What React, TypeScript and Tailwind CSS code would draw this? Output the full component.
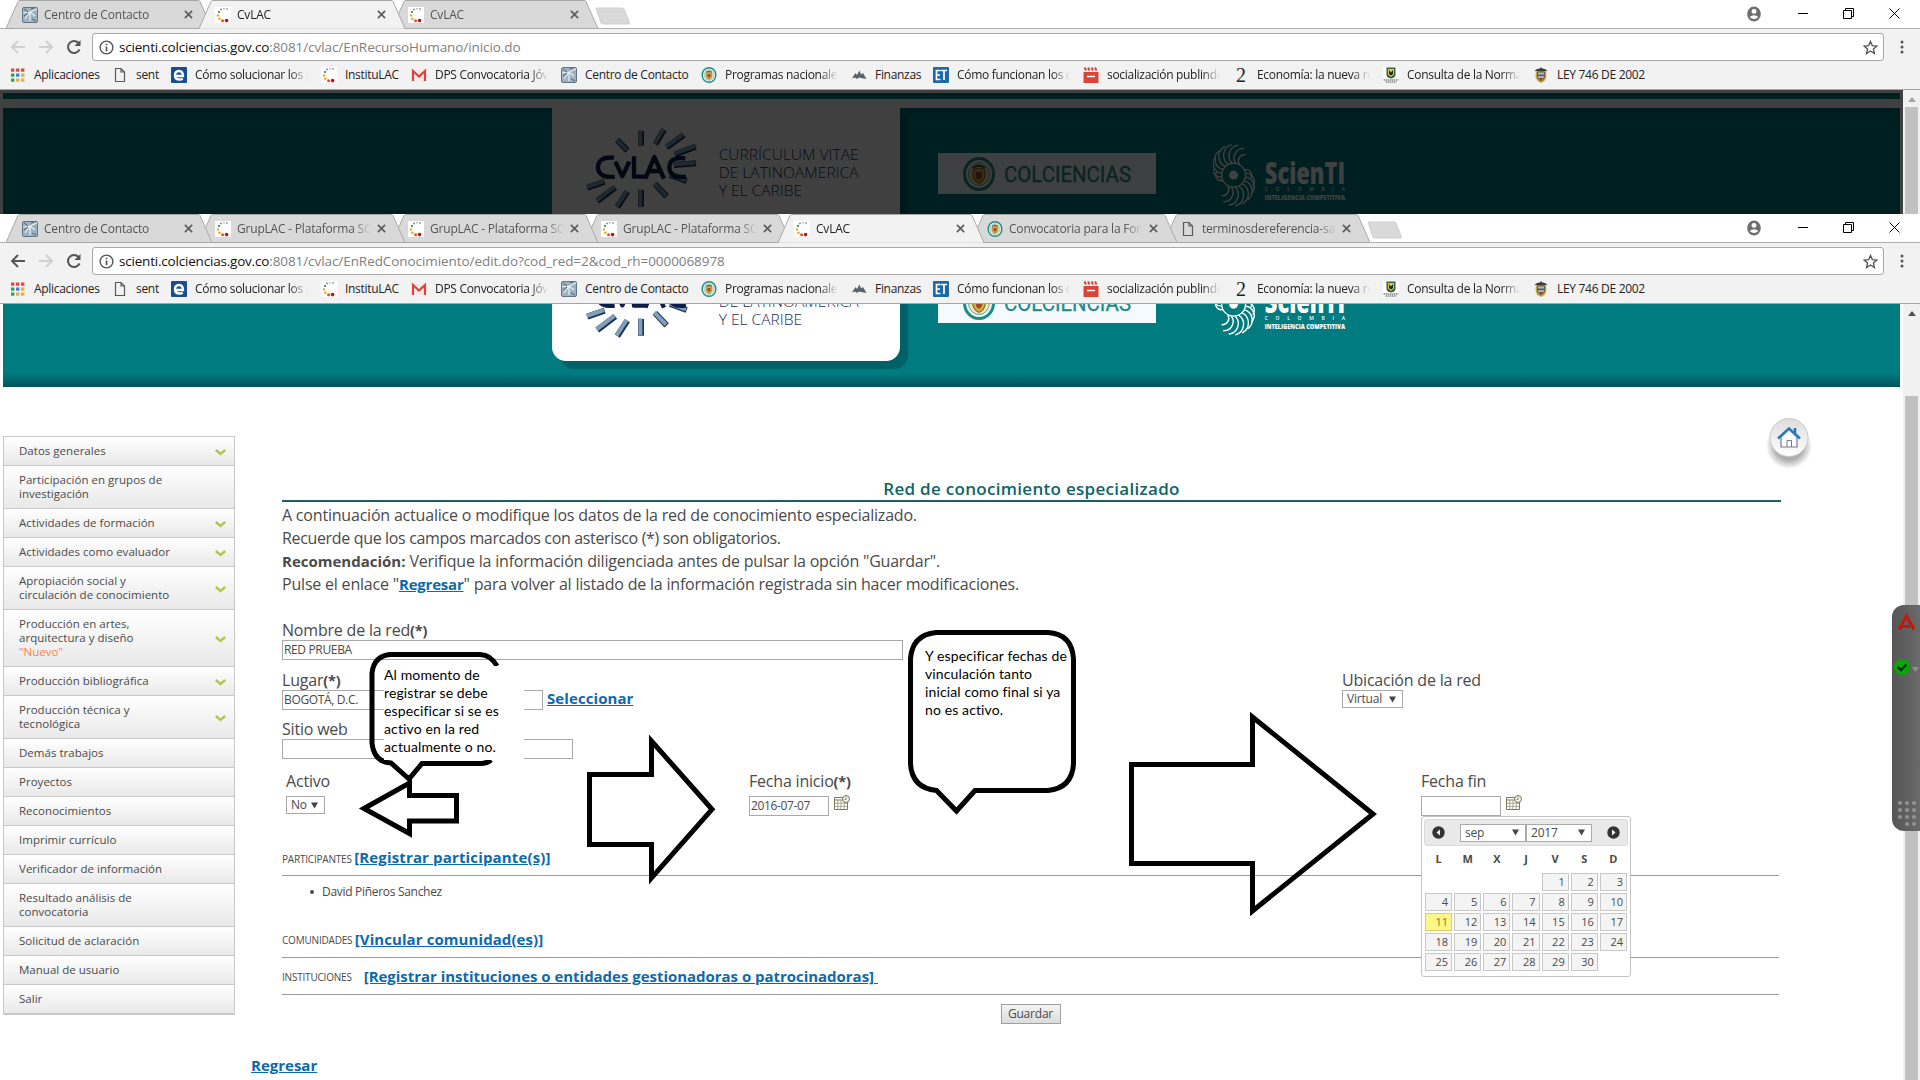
import React from "react";
import type { ReactNode } from "react";

/* ---------- small icons ---------- */

const DotsIcon = () => (
  <svg viewBox="0 0 16 16" className="h-4 w-4 bg-white">
    <circle cx="6" cy="2.4" r="0.9" fill="#6b7a99" />
    <circle cx="9" cy="1.8" r="0.8" fill="#8fa0a8" />
    <circle cx="12" cy="2" r="0.7" fill="#2b3a6b" />
    <circle cx="4" cy="5" r="1.1" fill="#1f7f5c" />
    <circle cx="3" cy="8.4" r="1.2" fill="#f0a22c" />
    <circle cx="4.4" cy="11.8" r="1.4" fill="#ecb31e" />
    <circle cx="7.6" cy="13.8" r="1.5" fill="#e0532a" />
    <circle cx="11.6" cy="13.6" r="1.8" fill="#b81414" />
  </svg>
);

const ContactIcon = () => (
  <svg viewBox="0 0 16 16" className="h-4 w-4">
    <rect x="0.5" y="0.5" width="15" height="15" rx="1.5" fill="#9db2c0" stroke="#5e7686" />
    <path d="M1 6 L8 5 L15 2 M8 5 L3 12 M8 5 L13 9 M8 5 V14" stroke="#e9f0f4" strokeWidth="1.2" fill="none" />
    <path d="M2 2 L6 5 M10 12 L14 14 M2 9 L6 6 M9 2 L12 1" stroke="#4d6778" strokeWidth="1" />
  </svg>
);

const PageIcon = () => (
  <svg viewBox="0 0 16 16" className="h-4 w-4" fill="none" stroke="#5a5a5a" strokeWidth="1.2">
    <path d="M3.5 1.5 H9 L12.5 5 V14.5 H3.5 Z M9 1.5 V5 H12.5" />
  </svg>
);

const CrestIcon = ({ className = "h-4 w-4" }: { className?: string }) => (
  <svg viewBox="0 0 32 34" className={className}>
    <ellipse cx="16" cy="17" rx="14.5" ry="15.5" fill="#f4f7f2" stroke="#1d8c87" strokeWidth="3" />
    <ellipse cx="16" cy="17" rx="10.5" ry="11.5" fill="#efe6bd" stroke="#5aa79f" strokeWidth="1" />
    <path d="M10 13 q6 -4 12 0 v7 q-1.5 5 -6 6.5 q-4.5 -1.5 -6 -6.5 z" fill="#d9b03a" stroke="#6b5a2a" strokeWidth="1" />
    <path d="M13 15 h6 v5 q-1 2 -3 3 q-2 -1 -3 -3 z" fill="#a04a35" />
    <path d="M10 11 q6 -5 12 0" stroke="#3d3a30" strokeWidth="2" fill="none" />
  </svg>
);

const AppsIcon = () => (
  <svg viewBox="0 0 16 16" className="h-4 w-4">
    {["#d94b3c", "#d94b3c", "#d94b3c", "#2f9e5b", "#3f7de0", "#e6b03a", "#2f9e5b", "#e6b03a", "#e6b03a"].map((c, i) => (
      <rect key={i} x={1 + (i % 3) * 5} y={1.5 + Math.floor(i / 3) * 5} width="3.4" height="3.2" fill={c} />
    ))}
  </svg>
);

const EdgeIcon = () => (
  <svg viewBox="0 0 16 16" className="h-4 w-4">
    <rect width="16" height="16" rx="1" fill="#174f93" />
    <path d="M4 9 H12 Q12 4 8 4 Q4 4 4 8.5 Q4 12.5 8.5 12.5 Q10.5 12.5 11.8 11.8" fill="none" stroke="#fff" strokeWidth="2.4" />
  </svg>
);

const MailIcon = () => (
  <svg viewBox="0 0 16 16" className="h-4 w-4">
    <rect x="1" y="2.5" width="14" height="11.5" fill="#f3e9e8" />
    <path d="M2 14 V4 L8 9.5 L14 4 V14" fill="none" stroke="#d5473c" strokeWidth="2.2" />
  </svg>
);

const PeaksIcon = () => (
  <svg viewBox="0 0 16 16" className="h-4 w-4">
    <path d="M1 11.5 L4.5 6 L6 8 L8.5 3.5 L10 7.5 L12 6 L15.5 12 L10 11 L8 10.5 L6 12 L4 10.5 Z" fill="#59626b" />
  </svg>
);

const EtIcon = () => (
  <svg viewBox="0 0 16 16" className="h-4 w-4">
    <rect width="16" height="16" rx="1" fill="#1d69a8" />
    <path d="M7.5 3.5 H3.5 V12.5 H7.5 M3.5 8 H7 M8 3.5 H14 M11 3.5 V13" stroke="#fff" strokeWidth="1.7" fill="none" />
  </svg>
);

const ClipIcon = () => (
  <svg viewBox="0 0 16 16" className="h-4 w-4">
    <path d="M0.5 5 H15.5 V16 H0.5 Z" fill="#d8433a" />
    <path d="M1.5 0.5 L3 3.5 M5 0.5 L6.5 3.5 M8.5 0.5 L10 3.5 M12 0.5 L13.5 3.5" stroke="#d8433a" strokeWidth="2" />
    <path d="M4 9.5 H12" stroke="#fff" strokeWidth="1.5" />
  </svg>
);

const TwoIcon = () => (
  <span className="flex h-4 w-4 items-center justify-center font-['Liberation_Serif',serif] text-[20px] leading-4 text-[#222]">2</span>
);

const ShieldIcon = () => (
  <svg viewBox="0 0 16 16" className="h-4 w-4">
    <rect width="16" height="16" fill="#fff" />
    <path d="M3.5 0.5 H12.5 V8 Q12 11 8 11.5 Q4 11 3.5 8 Z" fill="#2d6447" />
    <path d="M5 2 H11 V7.5 L8 10 L5 7.5 Z" fill="#e5cb32" />
    <path d="M6 3 L8 5.5 L10 3 V7 L8 8.5 L6 7 Z" fill="#222" />
    <path d="M0.5 13 H15.5 M2.5 15 H13.5" stroke="#888" strokeWidth="1.3" strokeDasharray="1.5 .5" />
  </svg>
);

const ArmsIcon = () => (
  <svg viewBox="0 0 16 16" className="h-4 w-4">
    <path d="M1.5 4 Q4 1 7 1.5 L8 0 L9 1.5 Q12 1 14.5 4 L11 4.5 H5 Z" fill="#3b3b33" />
    <path d="M3 5 Q1.5 10 4.5 14 L8 16 L11.5 14 Q14.5 10 13 5 Z" fill="#c9ab3a" />
    <path d="M4.5 5 H11.5 V10 Q11 13 8 14 Q5 13 4.5 10 Z" fill="#b9bcae" stroke="#54442a" strokeWidth="0.8" />
    <path d="M5 7.5 H11 V9.2 H5 Z" fill="#3a5fa0" />
    <path d="M5.5 11 H10.5 L8 13.5 Z" fill="#a83328" />
  </svg>
);

/* ---------- browser chrome ---------- */

type TabData = { icon: ReactNode; title: string; active?: boolean };

const Tab = ({ icon, title, active, order }: TabData & { order: number }) => (
  <div className="relative -mr-[13px] flex h-[29px] w-[206px] shrink-0 items-center pl-4" style={{ zIndex: active ? 30 : 20 - order }}>
    <svg viewBox="0 0 206 29" className="absolute inset-0 h-[29px] w-[206px]">
      <path d="M0 28.5 L12 1.5 Q12.5 0.5 14 0.5 H192 Q193.5 0.5 194 1.5 L206 28.5" fill={active ? "#f2f2f2" : "#d9d9d9"} stroke="#a8a8a8" />
      <path d={active ? "M1 29 H205" : "M0 28.5 H206"} stroke={active ? "#f2f2f2" : "#a8a8a8"} />
    </svg>
    <span className="relative">{icon}</span>
    <span className={`relative ml-1.5 w-[134px] overflow-hidden text-[12px] leading-4 tracking-[-0.2px] whitespace-nowrap [mask-image:linear-gradient(to_right,black_86%,transparent)] ${active ? "text-[#222]" : "text-[#555]"}`}>
      {title}
    </span>
    <svg viewBox="0 0 10 10" className="relative ml-[6px] h-[9px] w-[9px]" stroke="#5c5c5c" strokeWidth="1.8">
      <path d="M1 1 L9 9 M9 1 L1 9" />
    </svg>
  </div>
);

const WindowControls = () => (
  <div className="mr-[20px] ml-auto flex h-[27px] items-center">
    <svg viewBox="0 0 16 18" className="h-4 w-[14px]">
      <ellipse cx="8" cy="9" rx="7.8" ry="8.5" fill="#6e6e6e" />
      <circle cx="8" cy="6" r="2.8" fill="#fff" />
      <path d="M3 12.5 Q8 8.5 13 12.5 Q8 17 3 12.5Z" fill="#fff" />
    </svg>
    <span className="ml-[37px] h-px w-[10px] bg-black" />
    <svg viewBox="0 0 11 11" className="ml-[35px] h-[11px] w-[11px]" fill="none" stroke="#000">
      <path d="M0.5 2.5 H8.5 V10.5 H0.5 Z M2.5 2.5 V0.5 H10.5 V8.5 H8.5" />
    </svg>
    <svg viewBox="0 0 11 11" className="ml-[35px] h-[11px] w-[11px]" fill="none" stroke="#000">
      <path d="M0.5 0.5 L10.5 10.5 M10.5 0.5 L0.5 10.5" />
    </svg>
  </div>
);

const bookmarks: { icon: ReactNode; label: string; box: string; fade?: boolean }[] = [
  { icon: <AppsIcon />, label: "Aplicaciones", box: "w-[65px]" },
  { icon: <PageIcon />, label: "sent", box: "w-[22px]" },
  { icon: <EdgeIcon />, label: "Cómo solucionar los p", box: "w-[113px]", fade: true },
  { icon: <DotsIcon />, label: "InstituLAC", box: "w-[53px]" },
  { icon: <MailIcon />, label: "DPS Convocatoria Jóv", box: "w-[113px]", fade: true },
  { icon: <ContactIcon />, label: "Centro de Contacto", box: "w-[103px]" },
  { icon: <CrestIcon />, label: "Programas nacionales", box: "w-[113px]", fade: true },
  { icon: <PeaksIcon />, label: "Finanzas", box: "w-[45px]" },
  { icon: <EtIcon />, label: "Cómo funcionan los c", box: "w-[113px]", fade: true },
  { icon: <ClipIcon />, label: "socialización publinde", box: "w-[113px]", fade: true },
  { icon: <TwoIcon />, label: "Economía: la nueva re", box: "w-[113px]", fade: true },
  { icon: <ShieldIcon />, label: "Consulta de la Norma", box: "w-[113px]", fade: true },
  { icon: <ArmsIcon />, label: "LEY 746 DE 2002", box: "w-[92px]" },
];

const Chrome = ({ tabs, path, canGoBack }: { tabs: TabData[]; path: string; canGoBack?: boolean }) => (
  <header className="h-[90px] shrink-0 border-b border-[#a5a5a5] bg-[#f2f2f2] font-['Open_Sans',sans-serif]">
    <div className="relative flex h-[29px] border-b border-[#b0b0b0] bg-white pl-1.5">
      {tabs.map((t, i) => (
        <Tab key={i} {...t} order={i} />
      ))}
      <svg viewBox="0 0 36 18" className="mt-[7px] ml-[10px] h-[18px] w-[36px]">
        <path d="M1 1 H27 Q28.5 1 29 2 L34.5 16 Q34.5 17 33.5 17 H8 Q6.5 17 6 16 Z" fill="#d9d9d9" stroke="#cfcfcf" />
      </svg>
      <WindowControls />
    </div>
    <div className="flex h-[32px] items-center pt-[4px] pl-[10px]">
      <svg viewBox="0 0 16 16" className={`h-4 w-4 ${canGoBack ? "text-[#555]" : "text-[#d0d0d0]"}`} fill="none" stroke="currentColor" strokeWidth="1.9">
        <path d="M15 8 H2 M8 2 L2 8 L8 14" />
      </svg>
      <svg viewBox="0 0 16 16" className="ml-3 h-4 w-4" fill="none" stroke="#d0d0d0" strokeWidth="1.9">
        <path d="M1 8 H14 M8 2 L14 8 L8 14" />
      </svg>
      <svg viewBox="0 0 16 16" className="ml-3 h-4 w-4" fill="none" stroke="#555" strokeWidth="2">
        <path d="M13.5 10.5 A6 6 0 1 1 12.5 4" />
        <path d="M14.5 1 V7 H8.5 Z" fill="#555" stroke="none" />
      </svg>
      <div className="ml-[10px] flex h-[28px] w-[1792px] items-center rounded-[3px] border border-[#a9a9a9] bg-white pl-[6px]">
        <svg viewBox="0 0 16 16" className="h-[15px] w-[15px]" fill="none" stroke="#555" strokeWidth="1.5">
          <circle cx="8" cy="8" r="6.8" />
          <path d="M8 7 V12 M8 4 V5.6" strokeWidth="1.8" />
        </svg>
        <span className="ml-[5px] text-[13.5px] leading-4 tracking-[-0.07px] text-[#808080]">
          <span className="tracking-[-0.2px] text-[#111]">scienti.colciencias.gov.co</span>
          {path}
        </span>
        <svg viewBox="0 0 16 16" className="mr-[5px] ml-auto h-[15px] w-[15px]" fill="none" stroke="#555" strokeWidth="1.4">
          <path d="M8 1.5 L9.9 6 L14.8 6.4 L11.1 9.6 L12.2 14.4 L8 11.8 L3.8 14.4 L4.9 9.6 L1.2 6.4 L6.1 6 Z" />
        </svg>
      </div>
      <svg viewBox="0 0 4 14" className="ml-[16px] h-[14px] w-[4px]" fill="#555">
        <circle cx="2" cy="2" r="1.5" />
        <circle cx="2" cy="7" r="1.5" />
        <circle cx="2" cy="12" r="1.5" />
      </svg>
    </div>
    <nav className="flex h-[28px] items-center gap-[13px] pl-[10px]">
      {bookmarks.map((b) => (
        <span key={b.label} className="flex shrink-0 items-center gap-2">
          {b.icon}
          <span className={`${b.box} text-[12px] leading-4 tracking-[-0.3px] whitespace-nowrap text-[#222] ${b.fade ? "overflow-hidden [mask-image:linear-gradient(to_right,black_84%,transparent)]" : ""}`}>
            {b.label}
          </span>
        </span>
      ))}
    </nav>
  </header>
);

/* ---------- site banner ---------- */

const rays = [
  "M142 75 L172 107", "M213 48 V92", "M282 44 L256 88", "M341 60 L290 97", "M377 95 L315 118", "M378 145 L312 150",
  "M350 198 L300 180", "M255 207 L290 244", "M213 225 V275", "M172 230 L142 276", "M136 217 L82 258", "M104 200 L52 218",
];

const swirlTips = [[96, 32], [91, 14], [74, 4], [54, 2], [34, 8], [17, 21], [6, 41], [2, 64], [8, 87]];
const swirl = swirlTips.map(([tx, ty], i) => {
  const a = ((-62 - i * 18) * Math.PI) / 180;
  const x = 61 + 37 * Math.cos(a);
  const y = 94 + 37 * Math.sin(a);
  const r = 0.56 * Math.hypot(tx - x, ty - y);
  return `M${x.toFixed(1)} ${y.toFixed(1)} A${r.toFixed(1)} ${r.toFixed(1)} 0 0 1 ${tx} ${ty}`;
});

const Banner = () => (
  <div className="h-[168px] bg-white pt-[3px] pr-[3px] pl-[3px]">
    <div className="h-[6px] bg-[#007b80]" />
    <div className="mt-[9px] flex h-[150px] items-start bg-[linear-gradient(to_bottom,#006e73_0,#007b80_12px,#007b80_136px,#00555a_150px)] pl-[549px]">
      <div className="h-[124px] w-[348px] rounded-b-[14px] bg-white pt-[7px] pl-[18px] shadow-[8px_8px_1px_#006268]">
        <svg viewBox="0 0 930 300" className="h-[100px] w-[310px]">
          {rays.map((d, i) => (
            <g key={i} fill="none">
              <path d={d} stroke="#1e3350" strokeWidth="18" />
              <path d={d} stroke="#7f9fbd" strokeWidth="12" transform="translate(-2 -2)" />
            </g>
          ))}
          <g fill="none" stroke="#0b1d4a" strokeWidth="13" strokeLinejoin="round">
            <path d="M132 128 Q84 124 84 158 Q86 190 134 185" />
            <path d="M136 140 L157 184 L178 140" />
            <path d="M192 124 V185 H226" />
            <path d="M226 191 L253 126 L282 191 M238 168 H270" />
            <path d="M346 130 Q298 124 298 158 Q300 190 348 185" />
          </g>
          <g fontFamily="'Open Sans', sans-serif" fontSize="46" fill="#1b2c5c" fontWeight="300">
            <text x="446" y="135" textLength="420" lengthAdjust="spacingAndGlyphs">CURRÍCULUM VITAE</text>
            <text x="446" y="189" textLength="420" lengthAdjust="spacingAndGlyphs">DE LATINOAMERICA</text>
            <text x="446" y="243" textLength="250" lengthAdjust="spacingAndGlyphs">Y EL CARIBE</text>
          </g>
        </svg>
      </div>
      <div className="mt-[45px] ml-[38px] flex h-[41px] w-[218px] items-center bg-[#f5faff] pl-[25px]">
        <CrestIcon className="h-[34px] w-[32px]" />
        <svg viewBox="0 0 130 24" className="ml-[9px] h-[24px] w-[130px]">
          <text x="0" y="19.5" fontFamily="Roboto, sans-serif" fontSize="21.5" fontWeight="400" fill="#1d8c87" stroke="#1d8c87" strokeWidth="0.3" textLength="127" lengthAdjust="spacingAndGlyphs">COLCIENCIAS</text>
        </svg>
      </div>
      <svg viewBox="0 0 420 190" className="mt-[36px] ml-[57px] h-[63px] w-[140px]" fill="none" stroke="#fff">
        <g strokeWidth="4.2" strokeLinecap="round">
          {swirl.map((d, i) => (
            <path key={i} d={d} />
          ))}
          <g transform="rotate(180 61 94)">
            {swirl.map((d, i) => (
              <path key={i} d={d} />
            ))}
          </g>
          <circle cx="61" cy="94" r="36" strokeWidth="4" />
        </g>
        <circle cx="61" cy="94" r="13" fill="#fff" />
        <g fill="#fff" stroke="none" fontFamily="'Open Sans', sans-serif" fontWeight="800">
          <text x="155" y="120" fontSize="90" textLength="242" lengthAdjust="spacingAndGlyphs">ScienTI</text>
          <text x="155" y="141" fontSize="15" fontWeight="600" textLength="242">COLOMBIA</text>
          <text x="155" y="168" fontSize="21" textLength="242" lengthAdjust="spacingAndGlyphs">INTELIGENCIA COMPETITIVA</text>
        </g>
      </svg>
    </div>
  </div>
);

const Scrollbar = ({ thumb, muted }: { thumb: string; muted?: boolean }) => (
  <div className="flex w-[17px] shrink-0 flex-col items-center bg-[#f1f1f1]">
    <svg viewBox="0 0 8 5" className="mt-[7px] h-[5px] w-[8px] shrink-0" fill={muted ? "#a3a3a3" : "#505050"}>
      <path d="M4 0 L8 5 H0 Z" />
    </svg>
    <div className={`${thumb} w-[13px] flex-1 bg-[#c1c1c1]`} />
  </div>
);

/* ---------- sidebar ---------- */

const menu: { lines: string[]; open?: boolean; height: string; tag?: string }[] = [
  { lines: ["Datos generales"], open: true, height: "h-[29px]" },
  { lines: ["Participación en grupos de", "investigación"], height: "h-[43px]" },
  { lines: ["Actividades de formación"], open: true, height: "h-[29px]" },
  { lines: ["Actividades como evaluador"], open: true, height: "h-[29px]" },
  { lines: ["Apropiación social y", "circulación de conocimiento"], open: true, height: "h-[43px]" },
  { lines: ["Producción en artes,", "arquitectura y diseño"], tag: '"Nuevo"', open: true, height: "h-[57px]" },
  { lines: ["Producción bibliográfica"], open: true, height: "h-[29px]" },
  { lines: ["Producción técnica y", "tecnológica"], open: true, height: "h-[43px]" },
  { lines: ["Demás trabajos"], height: "h-[29px]" },
  { lines: ["Proyectos"], height: "h-[29px]" },
  { lines: ["Reconocimientos"], height: "h-[29px]" },
  { lines: ["Imprimir currículo"], height: "h-[29px]" },
  { lines: ["Verificador de información"], height: "h-[29px]" },
  { lines: ["Resultado análisis de", "convocatoria"], height: "h-[43px]" },
  { lines: ["Solicitud de aclaración"], height: "h-[29px]" },
  { lines: ["Manual de usuario"], height: "h-[29px]" },
  { lines: ["Salir"], height: "h-[28px]" },
];

const Sidebar = () => (
  <aside className="mt-[49px] ml-[3px] w-[232px] shrink-0 self-start border border-b-2 border-[#c8c8c8]">
    {menu.map((m) => (
      <div key={m.lines[0]} className={`${m.height} flex items-center justify-between border-b border-[#c8c8c8] bg-gradient-to-b from-white to-[#e9e9e9] pr-[8px] pl-[15px] last:border-b-0`}>
        <span className="text-[11.5px] leading-[14px] tracking-[0.02px] text-[#4a4a4a]">
          {m.lines.map((l) => (
            <span key={l} className="block whitespace-nowrap">{l}</span>
          ))}
          {m.tag && <span className="block text-[#ff7f50]">{m.tag}</span>}
        </span>
        {m.open && (
          <svg viewBox="0 0 11 7" className="mt-0.5 h-[7px] w-[11px]" fill="none" stroke="#b0c84a" strokeWidth="2.4">
            <path d="M0.8 1 L5.5 5 L10.2 1" />
          </svg>
        )}
      </div>
    ))}
  </aside>
);

/* ---------- form ---------- */

const A = ({ children }: { children: ReactNode }) => (
  <a className="text-[15px] font-bold text-[#0d69ac] underline">{children}</a>
);

const Label = ({ children, required }: { children: ReactNode; required?: boolean }) => (
  <label className="block h-5 text-[16px] leading-[21px] tracking-[-0.2px] whitespace-nowrap">
    {children}
    {required && <b className="text-[14.5px]">(*)</b>}
  </label>
);

const Field = ({ className, value = "" }: { className: string; value?: string }) => (
  <div className={`${className} flex h-5 shrink-0 items-center border border-[#a9a9a9] bg-white pl-px text-[12px] leading-4 tracking-[-0.35px] whitespace-nowrap`}>{value}</div>
);

const Select = ({ className, value }: { className: string; value: string }) => (
  <div className={`${className} flex h-[18px] shrink-0 items-center justify-between border border-[#a9a9a9] bg-white pr-[6px] pl-1 text-[12px] leading-4 tracking-[-0.2px]`}>
    {value}
    <svg viewBox="0 0 7 7" className="h-[7px] w-[7px]" fill="#444">
      <path d="M0 0.5 H7 L3.5 6.5 Z" />
    </svg>
  </div>
);

const DateIcon = () => (
  <svg viewBox="0 0 16 16" className="-mt-px ml-[5px] h-4 w-4 shrink-0" fill="none" stroke="#77785a">
    <path d="M0.5 2.5 H13.5 V14.5 H0.5 Z M0.5 5 H13.5" />
    <path d="M0.5 8.2 H13.5 M0.5 11.4 H13.5 M3.8 5.5 V14.5 M7 5.5 V14.5 M10.3 5.5 V14.5" strokeWidth="0.6" />
    <circle cx="12" cy="4" r="3.5" fill="#f3f3e6" />
    <path d="M12 2 V4.5 L10.5 4.5" strokeWidth="0.8" />
  </svg>
);

const Section = ({ name, link, className }: { name: string; link: string; className: string }) => (
  <div className={`${className} flex w-[1497px] items-center border-b border-[#9a9a9a] whitespace-pre`}>
    <span className="pt-[3px] text-[10px] tracking-[-0.2px]">{name}</span>
    <A>{link}</A>
  </div>
);

const Calendar = () => (
  <div className="absolute top-[20px] left-0 h-[161px] w-[210px] rounded-[3px] border border-[#c4c4c4] bg-white p-[2px]">
    <div className="flex h-[27px] items-center rounded-[3px] border border-[#dadada] bg-[#e9e9e9] px-[7px]">
      <svg viewBox="0 0 13 13" className="h-[13px] w-[13px]">
        <circle cx="6.5" cy="6.5" r="6.2" fill="#333" />
        <path d="M8 3.5 V9.5 L4.5 6.5 Z" fill="#fff" />
      </svg>
      <Select className="ml-[15px] w-[66px]" value="sep" />
      <Select className="w-[66px]" value="2017" />
      <svg viewBox="0 0 13 13" className="ml-auto h-[13px] w-[13px]">
        <circle cx="6.5" cy="6.5" r="6.2" fill="#333" />
        <path d="M5 3.5 V9.5 L8.5 6.5 Z" fill="#fff" />
      </svg>
    </div>
    <div className="mb-0.5 grid grid-cols-7 gap-x-[2px] px-px text-center text-[11px] leading-[25px] font-bold">
      {["L", "M", "X", "J", "V", "S", "D"].map((d) => (
        <span key={d}>{d}</span>
      ))}
    </div>
    <div className="grid grid-cols-7 gap-[2px] px-px text-right text-[11px] leading-4">
      {Array.from({ length: 30 }, (_, i) => (
        <span key={i} className={`h-[18px] border pr-[3px] ${i === 0 ? "col-start-5" : ""} ${i === 10 ? "border-[#d6cf6a] bg-[#fdf885] text-[#7c7a30]" : "border-[#c8c8c8] bg-[#f4f4f4]"}`}>
          {i + 1}
        </span>
      ))}
    </div>
  </div>
);

const HomeButton = () => (
  <svg viewBox="0 0 48 56" className="h-[56px] w-[48px]">
    <defs>
      <radialGradient id="homeShade">
        <stop offset="0.6" stopColor="#9a9a9a" stopOpacity="0.8" />
        <stop offset="1" stopColor="#9a9a9a" stopOpacity="0" />
      </radialGradient>
      <linearGradient id="homeFace" x1="0" y1="0" x2="0" y2="1">
        <stop offset="0" stopColor="#dcdcdc" />
        <stop offset="1" stopColor="#ffffff" />
      </linearGradient>
    </defs>
    <circle cx="24" cy="29" r="23" fill="url(#homeShade)" />
    <circle cx="24" cy="20.5" r="19" fill="url(#homeFace)" stroke="#c9c9c9" />
    <path d="M16 20 L24 12 L32 20 V30 H16 Z" fill="#fff" stroke="#6c7b96" strokeWidth="1.2" />
    <path d="M22 30 V23.5 H26.5 V30" fill="none" stroke="#6c7b96" />
    <path d="M30 17 V11" stroke="#2f6ea5" strokeWidth="2.5" />
    <path d="M13 21.5 L24 11.5 L35 21.5" fill="none" stroke="#2f7ab8" strokeWidth="2.6" />
  </svg>
);

const Main = () => (
  <main className="ml-4 flex-1 text-[#4a4a4a]">
    <div className="flex h-[90px] justify-end pt-[30px] pr-[90px]">
      <HomeButton />
    </div>
    <div className="ml-[31px] w-[1499px]">
      <h1 className="h-[25px] border-b-2 border-[#1b5e63] text-center text-[17px] leading-[23px] font-semibold tracking-[0.3px] text-[#0f6468]">Red de conocimiento especializado</h1>
      <div className="mt-0.5 text-[16px] leading-[23px] tracking-[-0.2px]">
        <p className="h-[23px]">A continuación actualice o modifique los datos de la red de conocimiento especializado.</p>
        <p className="h-[23px] tracking-[-0.34px]">Recuerde que los campos marcados con asterisco (*) son obligatorios.</p>
        <p className="h-[23px]"><b className="text-[15px] tracking-normal">Recomendación:</b> Verifique la información diligenciada antes de pulsar la opción "Guardar".</p>
        <p className="h-[23px]">Pulse el enlace "<A>Regresar</A>" para volver al listado de la información registrada sin hacer modificaciones.</p>
      </div>

      <div className="mt-6">
        <Label required>Nombre de la red</Label>
        <Field className="w-[621px]" value="RED PRUEBA" />
      </div>

      <div className="mt-[10px] flex">
        <div className="w-[1060px]">
          <Label required>Lugar</Label>
          <div className="flex h-5 items-center leading-[18px]">
            <Field className="mr-1 w-[261px]" value="BOGOTÁ, D.C." />
            <span className="-mt-1 tracking-[0.08px]"><A>Seleccionar</A></span>
          </div>
        </div>
        <div>
          <Label>Ubicación de la red</Label>
          <Select className="w-[61px]" value="Virtual" />
        </div>
      </div>

      <div className="mt-[9px]">
        <Label>Sitio web</Label>
        <Field className="w-[291px]" />
      </div>

      <div className="mt-3 grid h-[45px] grid-cols-[467px_672px_360px]">
        <div className="pl-1">
          <Label>Activo</Label>
          <Select className="mt-[5px] w-[39px]" value="No" />
        </div>
        <div>
          <Label required>Fecha inicio</Label>
          <div className="mt-[5px] flex">
            <Field className="w-[80px]" value="2016-07-07" />
            <DateIcon />
          </div>
        </div>
        <div>
          <Label>Fecha fin</Label>
          <div className="relative z-10 mt-[5px] flex">
            <Field className="w-[80px]" />
            <DateIcon />
            <Calendar />
          </div>
        </div>
      </div>

      <Section className="mt-[27px] h-[33px] pb-[3px] tracking-[0.15px]" name="PARTICIPANTES " link="[Registrar participante(s)]" />
      <ul className="h-[47px] pt-2 pl-10 text-[12px] leading-4 tracking-[-0.3px]">
        <li className="flex items-center">
          <span className="-ml-[12px] mr-[8px] h-1 w-1 rounded-full bg-[#4a4a4a]" />
          David Piñeros Sanchez
        </li>
      </ul>
      <Section className="h-[35px] pb-[2px] tracking-[0.08px]" name="COMUNIDADES " link="[Vincular comunidad(es)]" />
      <Section className="h-[37px] tracking-[-0.03px]" name="INSTITUCIONES     " link="[Registrar instituciones o entidades gestionadoras o patrocinadoras] " />
      <div className="flex w-[1497px] justify-center pt-[9px]">
        <div className="h-5 w-[60px] border border-[#a0a0a0] bg-gradient-to-b from-[#f4f4f4] to-[#dcdcdc] text-center text-[12px] leading-[18px] tracking-[-0.2px]">Guardar</div>
      </div>
    </div>
    <p className="mt-[31px] leading-5"><A>Regresar</A></p>
  </main>
);

/* ---------- annotations drawn over the page ---------- */

const Annotations = () => (
  <>
    <svg viewBox="0 0 1920 1080" className="pointer-events-none absolute inset-0 z-20 h-[1080px] w-[1920px]" fill="none" stroke="#000" strokeWidth="5">
      <path d="M497 666 Q491 655 480 654.5 H390 Q374 656 372 673 V743 Q374 762 391 763 L409 779 L422 763.5 H482 Q488 763 491 760" />
      <path d="M364 808.5 L409.5 783 V795.5 H456.5 V821 H409.5 V833.5 Z" />
      <path d="M589.5 774.5 H651.5 V741 L712 809.3 L651.5 878 V844.5 H589.5 Z" />
      <path d="M1131.5 764.5 H1252.5 V717 L1373 814 L1252.5 911 V863.5 H1131.5 Z" />
      <path d="M936.5 790.5 L956.5 811 L975 790.5 H1048 Q1072 788 1073.5 764 V659 Q1072 634 1048 632.5 H936 Q912 635 910.5 659 V764 Q912 788 936.5 790.5 Z" />
    </svg>
    <p className="absolute top-[666px] left-[384px] z-30 h-[94px] w-[140px] bg-white font-[Lato,sans-serif] text-[14px] leading-[18px] tracking-[0.12px] whitespace-nowrap text-black">
      Al momento de<br />registrar se debe<br />especificar si se es<br />activo en la red<br />actualmente o no.
    </p>
    <p className="absolute top-[647px] left-[925px] z-30 font-[Lato,sans-serif] text-[14px] leading-[18px] tracking-[0.12px] whitespace-nowrap text-black">
      Y especificar fechas de<br />vinculación tanto<br />inicial como final si ya<br />no es activo.
    </p>
  </>
);

const Gadget = () => (
  <div className="absolute top-[605px] right-0 z-30 h-[226px] w-[28px] rounded-l-[12px] bg-gradient-to-r from-[#555] to-[#6a6a6a]">
    <svg viewBox="0 0 28 226" className="h-[226px] w-[28px]">
      <path d="M7 24.5 L14.5 11 L22 24.5 M10 21.5 H18" fill="none" stroke="#c4150f" strokeWidth="3" />
      <circle cx="10" cy="62" r="8" fill="#06a806" />
      <path d="M5.5 62 L9 65 L14.5 59.5" fill="none" stroke="#0b2e0b" strokeWidth="2.4" />
      <path d="M20 62 H27 L23.5 67 Z" fill="#8f8f8f" />
      {Array.from({ length: 12 }, (_, i) => i).filter((i) => i !== 9).map((i) => (
        <circle key={i} cx={8 + (i % 3) * 7} cy={198 + Math.floor(i / 3) * 7} r="2.1" fill="#929292" />
      ))}
    </svg>
  </div>
);

export default function App() {
  const contact = { icon: <ContactIcon />, title: "Centro de Contacto" };
  const grup = { icon: <DotsIcon />, title: "GrupLAC - Plataforma SC" };
  return (
    <div className="relative flex h-[1080px] w-[1920px] flex-col overflow-hidden bg-white font-['Open_Sans',sans-serif]">
      <section className="flex h-[214px] shrink-0 flex-col overflow-hidden">
        <Chrome path=":8081/cvlac/EnRecursoHumano/inicio.do" tabs={[contact, { icon: <DotsIcon />, title: "CvLAC", active: true }, { icon: <DotsIcon />, title: "CvLAC" }]} />
        <div className="flex h-[124px] overflow-hidden">
          <div className="relative flex-1">
            <Banner />
            <div className="absolute inset-0 bg-black/75" />
          </div>
          <Scrollbar thumb="mt-[5px]" muted />
        </div>
      </section>
      <section className="flex min-h-0 flex-1 flex-col">
        <Chrome
          canGoBack
          path=":8081/cvlac/EnRedConocimiento/edit.do?cod_red=2&cod_rh=0000068978"
          tabs={[
            contact,
            grup,
            grup,
            grup,
            { icon: <DotsIcon />, title: "CvLAC", active: true },
            { icon: <CrestIcon />, title: "Convocatoria para la Form" },
            { icon: <PageIcon />, title: "terminosdereferencia-san" },
          ]}
        />
        <div className="flex min-h-0 flex-1">
          <div className="flex flex-1 flex-col overflow-hidden">
            <div className="flex h-[83px] shrink-0 flex-col justify-end overflow-hidden">
              <div className="shrink-0">
                <Banner />
              </div>
            </div>
            <div className="flex">
              <Sidebar />
              <Main />
            </div>
          </div>
          <Scrollbar thumb="mt-[80px]" />
        </div>
      </section>
      <Annotations />
      <Gadget />
    </div>
  );
}
